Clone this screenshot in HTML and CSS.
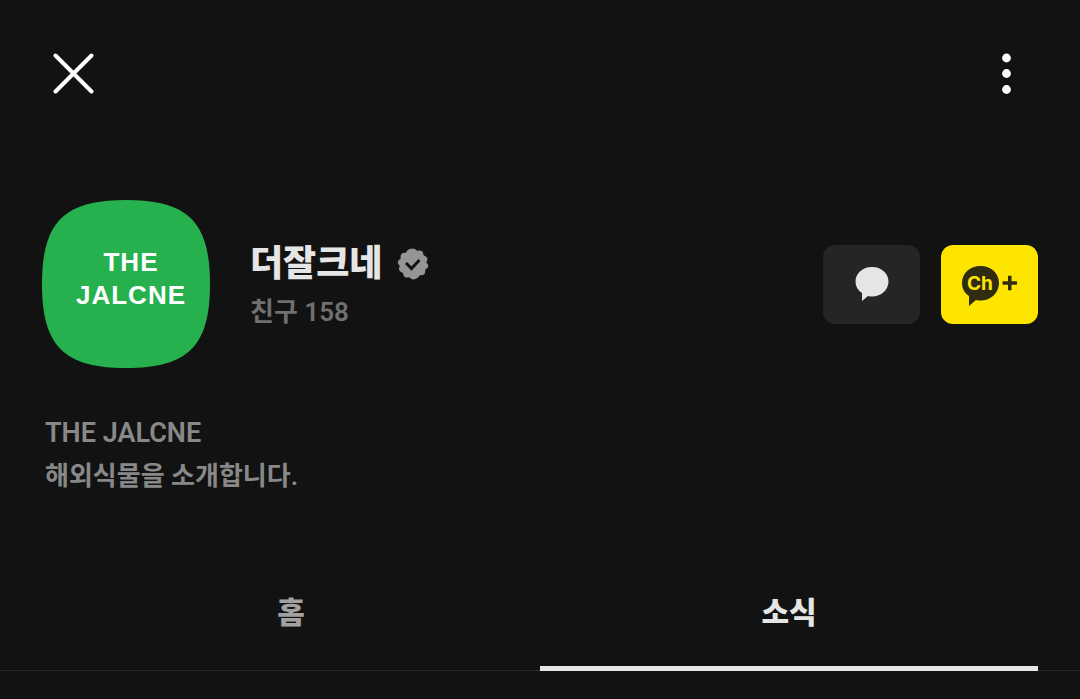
FILE: index.html
```html
<!DOCTYPE html>
<html lang="ko">
<head>
    <meta charset="UTF-8">
    <meta name="viewport" content="width=device-width, initial-scale=1.0">
    <title>더잘크네</title>
    <link rel="stylesheet" href="styles.css">
</head>
<body>
    <header class="top-bar">
        <button type="button" class="icon-button" aria-label="닫기">
            <svg width="42" height="42" viewBox="0 0 42 42">
                <path d="M2.5 2.5L38.5 38.5M38.5 2.5L2.5 38.5" stroke="#fff" stroke-width="4" stroke-linecap="round"/>
            </svg>
        </button>
        <button type="button" class="icon-button" aria-label="더보기">
            <svg width="10" height="42" viewBox="0 0 10 42" fill="#fff">
                <circle cx="5.5" cy="5" r="4.4"/>
                <circle cx="5.5" cy="20.5" r="4.4"/>
                <circle cx="5.5" cy="36.5" r="4.4"/>
            </svg>
        </button>
    </header>

    <main>
        <!-- Channel profile -->
        <section class="profile">
            <div class="avatar">
                <svg class="avatar-shape" viewBox="0 0 168 168" aria-hidden="true">
                    <path d="M84 0C146 0 168 22 168 84S146 168 84 168 0 146 0 84 22 0 84 0Z" fill="#26b14e"/>
                </svg>
                <span class="avatar-text">THE<br>JALCNE</span>
            </div>

            <div class="profile-info">
                <div class="name-row">
                    <h1>더잘크네</h1>
                    <svg class="badge" width="32" height="32" viewBox="0 0 32 32" aria-hidden="true">
                        <path d="M16 .5Q18 .5 20 2.8Q23.5 1.9 25 3.2Q26.3 4.3 26.6 7.2Q29.4 8.2 30.2 10Q30.9 11.8 29.3 14.4Q31.5 16.3 31.3 18.2Q31 20.2 28.3 21.6Q28.5 24.7 27.2 26.2Q25.9 27.5 22.9 27.2Q21.2 30 19.4 30.5Q17.8 31.4 16 31.4Q14 31.4 12.4 29.3Q9.4 30 7.7 28.9Q6.1 27.8 6 24.9Q3.1 24 2.2 22.2Q1.4 20.5 2.9 17.9Q.5 16 .7 14Q1 12 3.7 10.7Q3.2 7.7 4.4 6Q5.7 4.5 8.7 4.9Q10.2 2 12 1.3Q14.1.5 16 .5Z" fill="#959595"/>
                        <path d="M9 15L14.5 20.5L22.5 12" fill="none" stroke="#121212" stroke-width="3"/>
                    </svg>
                </div>
                <p class="friends">친구 158</p>
            </div>

            <div class="actions">
                <button type="button" class="action chat" aria-label="채팅하기">
                    <svg width="34" height="36" viewBox="0 0 34 36" aria-hidden="true">
                        <path d="M17 1C26.3 1 33.5 7.2 33.5 15.5S26.3 30.5 17 30.5Q14.8 30.5 13 30L7 35V27Q.5 22.8 .5 15.5C.5 7.2 7.7 1 17 1Z" fill="#e5e5e5"/>
                    </svg>
                </button>
                <button type="button" class="action add" aria-label="채널 추가">
                    <svg width="56" height="45" viewBox="0 -3 56 45" aria-hidden="true">
                        <path d="M18.5 1C29 1 37 8.3 37 18S29 35.5 18.5 35.5Q16 35.5 14 35L7 41V31Q0 26.5 0 18C0 8.3 8 1 18.5 1Z" fill="#302c12"/>
                        <text x="18" y="25" class="ch-text">Ch</text>
                        <path d="M40.5 18H55M47.75 10.75V25.25" stroke="#302c12" stroke-width="3.5"/>
                    </svg>
                </button>
            </div>
        </section>

        <section class="bio">
            <p class="bio-name">THE JALCNE</p>
            <p>해외식물을 소개합니다.</p>
        </section>

        <!-- Tabs -->
        <nav class="tabs">
            <a href="#home" class="tab">홈</a>
            <a href="#news" class="tab active" aria-current="page">소식</a>
        </nav>
    </main>
</body>
</html>
```
FILE: styles.css
```css
* {
    margin: 0;
    padding: 0;
    box-sizing: border-box;
}

body {
    font-family: Roboto, "Noto Sans CJK KR", sans-serif;
    background-color: #121212;
    color: #e5e5e5;
}

button {
    border: none;
    background: none;
    cursor: pointer;
}

svg {
    display: block;
}

.top-bar {
    display: flex;
    justify-content: space-between;
    align-items: center;
    padding: 42px 58px 42px 42px;
}

.icon-button {
    padding: 11px;
}

/* Profile */
.profile {
    display: flex;
    align-items: center;
    padding: 52px 42px 0;
}

.avatar {
    position: relative;
    display: flex;
    flex-shrink: 0;
    width: 168px;
    height: 168px;
    justify-content: center;
    padding: 46px 0 0 10px;
}

.avatar-shape {
    position: absolute;
    inset: 0;
}

.avatar-text {
    position: relative;
    font-family: "Liberation Sans", Arial, sans-serif;
    font-size: 26px;
    font-weight: bold;
    line-height: 33px;
    letter-spacing: 1px;
    text-align: center;
    color: #fff;
}

.profile-info {
    flex: 1;
    padding: 8px 0 0 40px;
}

.name-row {
    display: flex;
    align-items: center;
    gap: 15px;
}

h1 {
    font-size: 36px;
    font-weight: 900;
    line-height: 48px;
}

.friends {
    font-size: 26px;
    font-weight: 600;
    line-height: 48px;
    color: #707070;
}

.actions {
    display: flex;
    gap: 21px;
}

.action {
    display: flex;
    align-items: center;
    justify-content: center;
    width: 97px;
    height: 79px;
    border-radius: 12px;
}

.chat {
    background-color: #252525;
}

.add {
    background-color: #fee500;
}

.ch-text {
    font-family: Inter, sans-serif;
    font-size: 19px;
    font-weight: 700;
    text-anchor: middle;
    fill: #fee500;
}

.bio {
    padding: 44px 45px 0;
    font-size: 26px;
    font-weight: 600;
    line-height: 43px;
    color: #888;
}

.bio-name {
    font-size: 27px;
}

/* Tabs */
.tabs {
    display: flex;
    margin-top: 58px;
    padding: 0 42px;
    border-bottom: 1px solid #2a2a2a;
}

.tab {
    flex: 1;
    margin-bottom: -1px;
    padding: 33px 0 29px;
    border-bottom: 5px solid transparent;
    font-size: 30px;
    font-weight: 900;
    line-height: 48px;
    text-align: center;
    text-decoration: none;
    color: #a0a0a0;
}

.tab.active {
    border-bottom-color: #e5e5e5;
    color: #e5e5e5;
}
```
